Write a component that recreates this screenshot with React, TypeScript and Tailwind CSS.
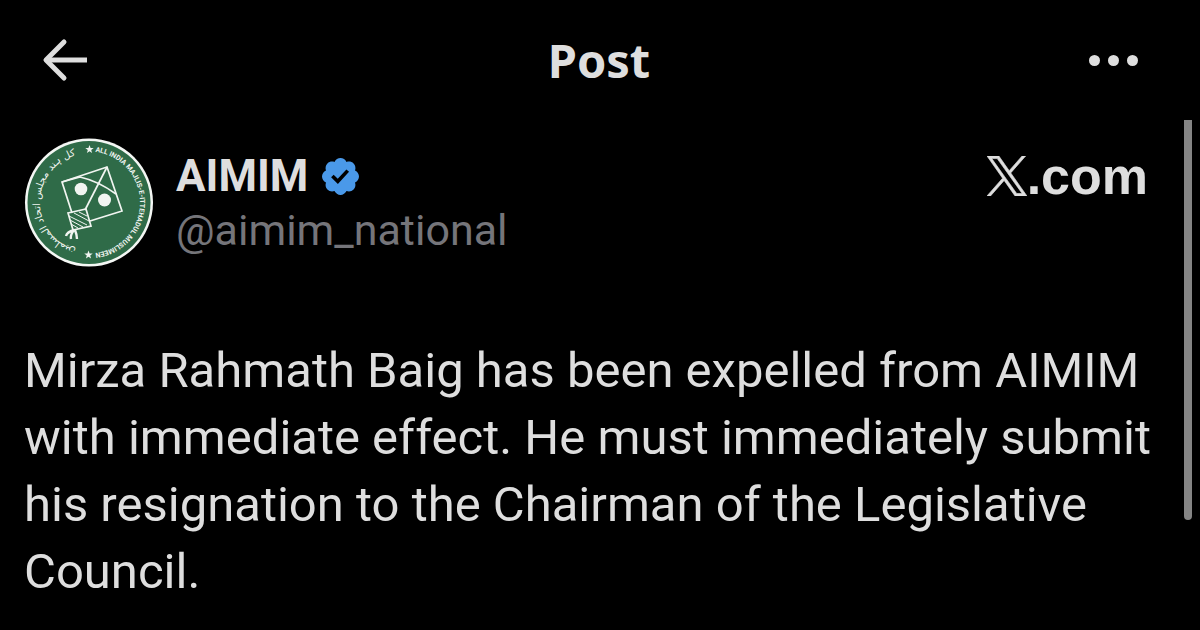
import React from "react";

const STAR =
  "M0 -4.4 L1.1 -1.4 L4.2 -1.4 L1.7 0.5 L2.6 3.5 L0 1.7 L-2.6 3.5 L-1.7 0.5 L-4.2 -1.4 L-1.1 -1.4 Z";

const PartyLogo = () => (
  <svg viewBox="0 0 130 130" className="size-[130px] shrink-0" role="img" aria-label="AIMIM">
    <defs>
      <path id="latin-ring" d="M65 13.5 A51 51 0 0 1 65 115.5" />
      <path id="urdu-ring" d="M65 113.5 A49 49 0 0 1 65 15.5" />
    </defs>
    <circle cx="65" cy="64.5" r="64" fill="#f4f7f4" />
    <circle cx="65" cy="64.5" r="61.5" fill="#2f6b48" />
    <g fill="#f1f5f1">
      <path d={STAR} transform="translate(65.5 11.5)" />
      <path d={STAR} transform="translate(64.5 117)" />
      <text
        textAnchor="middle"
        className="font-['Liberation_Sans_Narrow','Roboto',sans-serif] text-[7px] font-bold"
      >
        <textPath href="#latin-ring" startOffset="50%">
          ALL INDIA MAJLIS-E-ITTEHADUL MUSLIMEEN
        </textPath>
      </text>
      <text
        direction="rtl"
        textAnchor="middle"
        className="font-['DejaVu_Sans',sans-serif] text-[10px]"
      >
        <textPath href="#urdu-ring" startOffset="50%">
          کل ہند مجلس اتحاد المسلمین
        </textPath>
      </text>
      <circle cx="57" cy="51" r="6.3" />
      <circle cx="80.5" cy="62" r="6.5" />
    </g>
    {/* kite */}
    <g fill="none" stroke="#f1f5f1" strokeWidth="1.7">
      <path d="M48 75 L38 44 L83 29 L98 73 L66 83" />
      <path d="M83 29 L61 72" />
      <path d="M38 44 L56 39 Q74 43 92 56" />
      <path d="M44 75 L62 71 L67 88 L49 92 Z" />
      <path d="M45 78 L63 87 M50 75 L65 83 M55 74 L63 78 M46 82 L59 89 M47 86 L54 90" strokeWidth="1" />
      <path d="M50 92 Q43 94 42 98 M50 92 Q46 97 47 101 M51 92 Q53 97 53 101" strokeWidth="2.4" />
    </g>
  </svg>
);

const VerifiedBadge = () => (
  <svg viewBox="1.75 1.75 20.5 20.5" className="size-[37px] fill-[#4a99e9]" role="img" aria-label="Verified">
    <path d="M22.25 12c0-1.43-.88-2.67-2.19-3.34.46-1.39.2-2.9-.81-3.91s-2.52-1.27-3.91-.81c-.66-1.31-1.91-2.19-3.34-2.19s-2.67.88-3.33 2.19c-1.4-.46-2.91-.2-3.92.81s-1.26 2.52-.8 3.91c-1.31.67-2.2 1.91-2.2 3.34s.89 2.67 2.2 3.34c-.46 1.39-.21 2.9.8 3.91s2.52 1.26 3.91.81c.67 1.31 1.91 2.19 3.34 2.19s2.68-.88 3.34-2.19c1.39.45 2.9.2 3.91-.81s1.27-2.52.81-3.91c1.31-.67 2.19-1.91 2.19-3.34zm-11.71 4.2L6.8 12.46l1.41-1.42 2.26 2.26 4.8-5.23 1.47 1.36-6.2 6.77z" />
  </svg>
);

const XLogo = () => (
  <svg
    viewBox="0 0 24 24"
    className="size-10 fill-current stroke-current"
    strokeWidth="0.4"
    aria-hidden="true"
  >
    <path d="M14.258 10.152L23.176 0h-2.113l-7.747 8.813L7.133 0H0l9.352 13.328L0 23.973h2.113l8.176-9.309 6.531 9.309h7.133zm-2.895 3.293l-.949-1.328L2.875 1.56h3.246l6.086 8.523.945 1.328 7.91 11.078h-3.246z" />
  </svg>
);

const Header = () => (
  <header className="grid h-[120px] grid-cols-3 items-center pl-10 pr-[62px]">
    <button aria-label="Back" className="w-fit">
      <svg viewBox="0 0 50 44" className="h-11 w-[50px]" fill="none" stroke="currentColor" strokeWidth="5">
        <path d="M47 22 H6" />
        <path d="M24 4 L6 22 L24 40" strokeLinejoin="round" strokeLinecap="round" />
      </svg>
    </button>
    <h1 className="pl-5 text-center font-['Noto_Sans',sans-serif] text-[47px] font-bold">Post</h1>
    <button aria-label="More" className="flex w-fit gap-2 justify-self-end">
      <span className="size-[11px] rounded-full bg-current" />
      <span className="size-[11px] rounded-full bg-current" />
      <span className="size-[11px] rounded-full bg-current" />
    </button>
  </header>
);

const App = () => {
  return (
    <div className="min-h-screen bg-black font-['Roboto',sans-serif] text-[#dedede]">
      <Header />
      <div className="flex">
        <article className="min-w-0 flex-1 pb-6 pl-6 pt-[18px]">
          <div className="flex gap-[22px]">
            <PartyLogo />
            <div className="flex-1">
              <div className="flex items-center gap-[14px] pt-3">
                <h2 className="text-[44px] font-bold leading-[52px]">AIMIM</h2>
                <VerifiedBadge />
              </div>
              <a href="#profile" className="block text-[43px] leading-[56px] text-[#75757a]">
                @aimim_national
              </a>
            </div>
            {/* source mark */}
            <div className="flex h-[76px] items-center pr-9 font-['Liberation_Sans',sans-serif]">
              <XLogo />
              <span className="text-[52px] font-bold leading-[52px]">.com</span>
            </div>
          </div>
          <p className="mt-[69px] pr-5 text-[49px] leading-[67px]">
            Mirza Rahmath Baig has been expelled from AIMIM with immediate effect. He must
            immediately submit his resignation to the Chairman of the Legislative Council.
          </p>
        </article>
        <div className="mr-2 h-[400px] w-2 shrink-0 rounded-b-full bg-[#858585]" />
      </div>
    </div>
  );
};

export default App;
